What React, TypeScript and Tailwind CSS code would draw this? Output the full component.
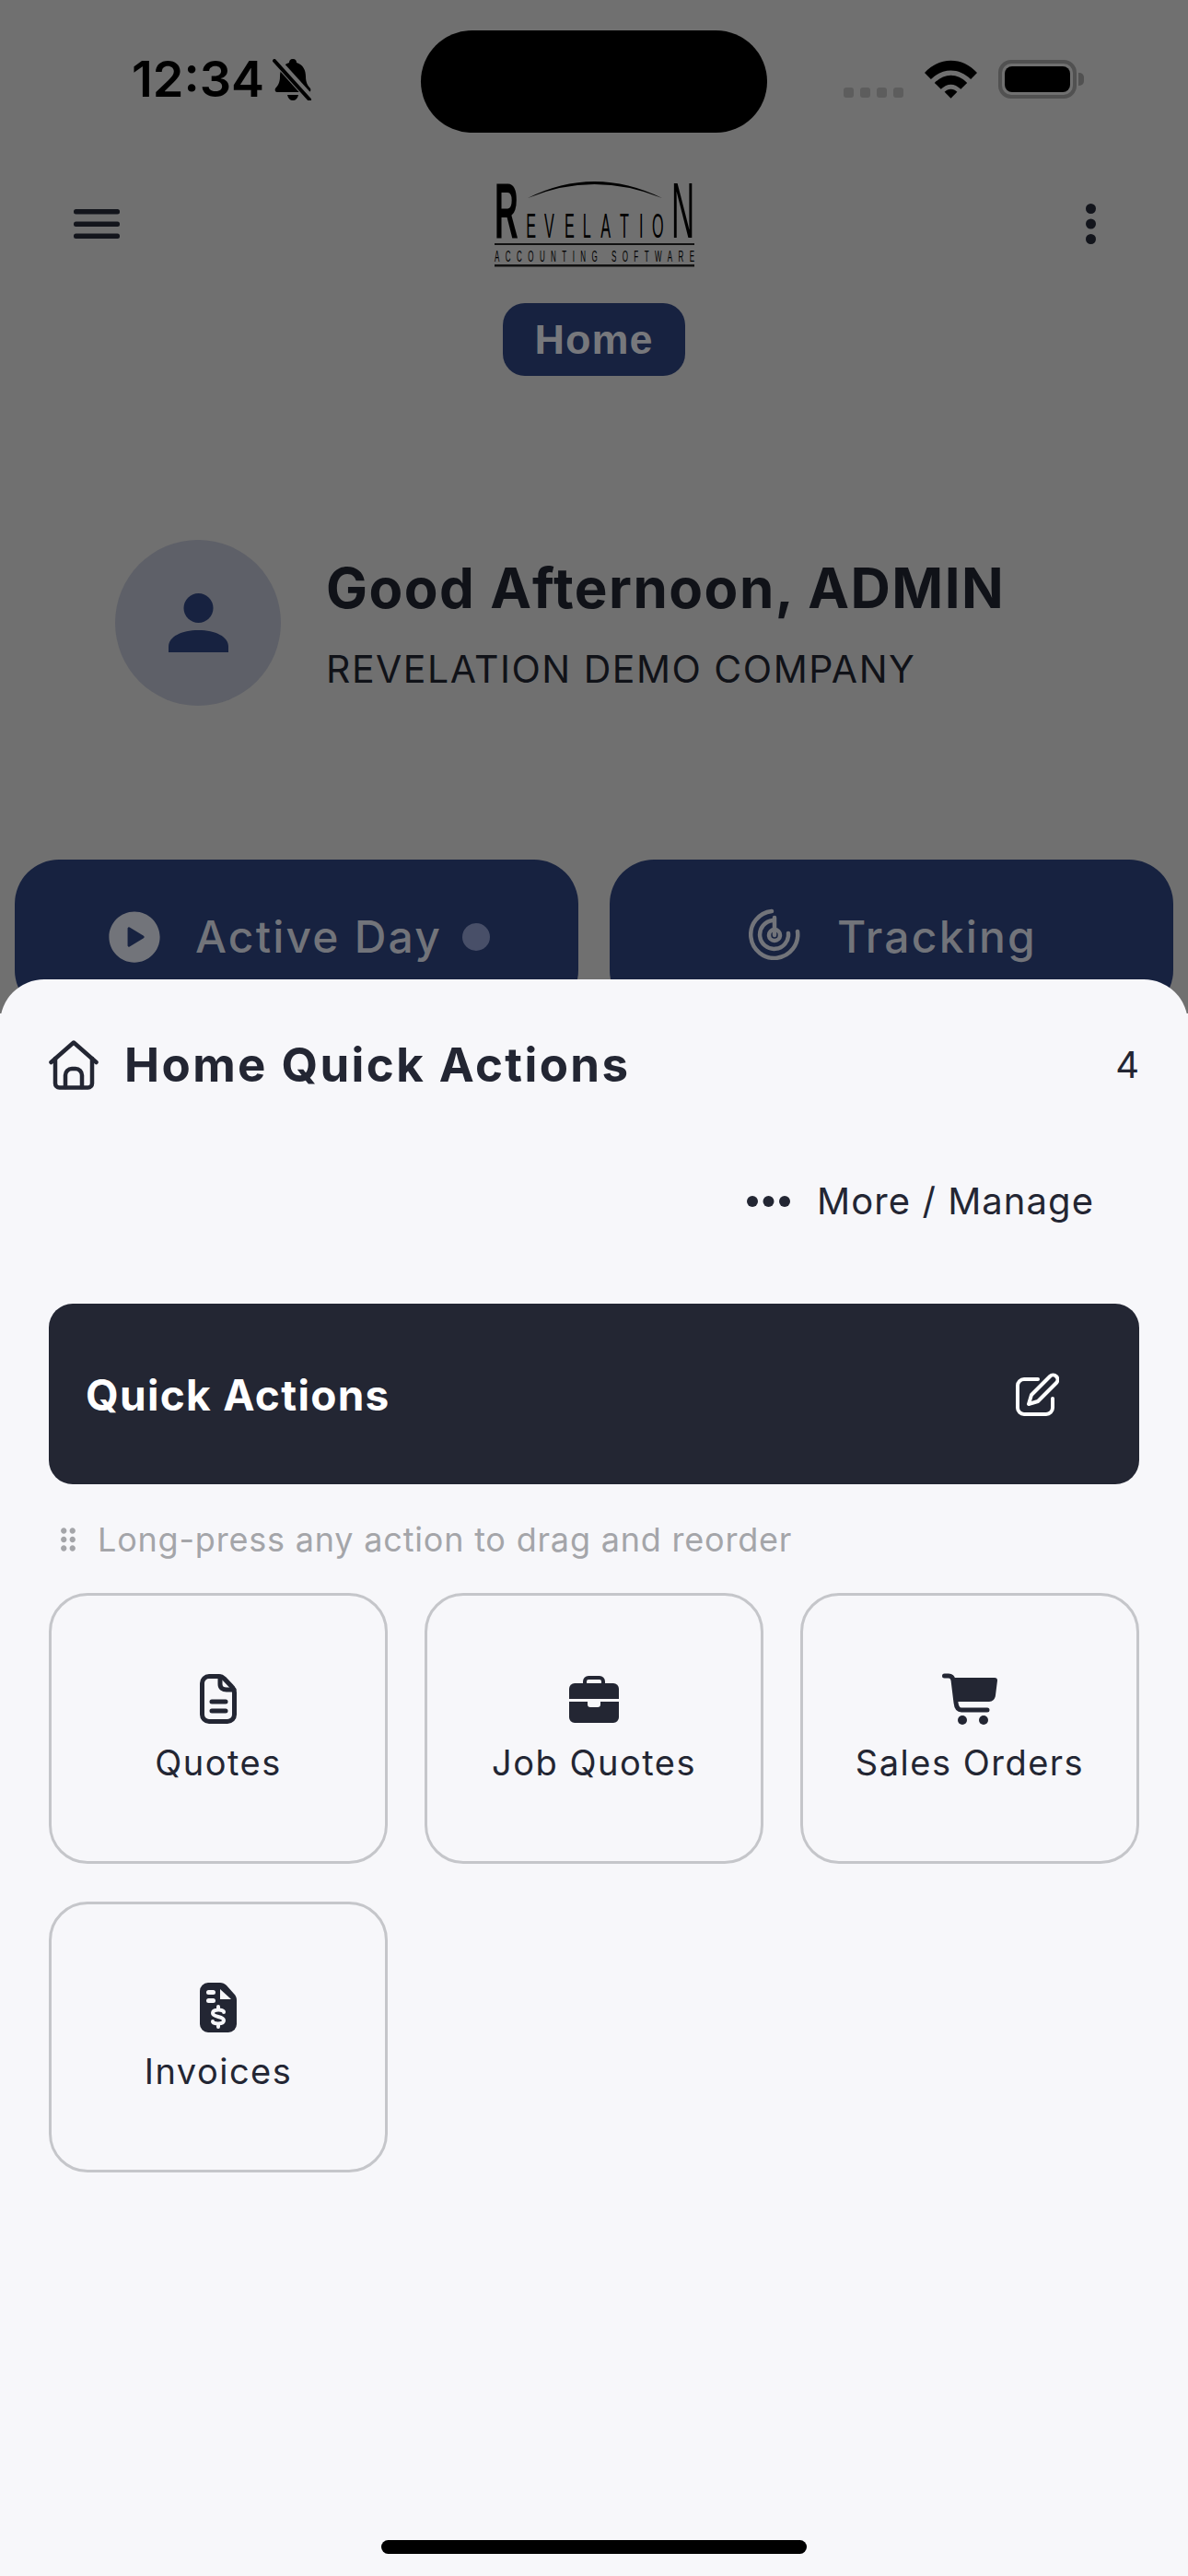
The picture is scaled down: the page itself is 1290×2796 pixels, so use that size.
import { IoPlayCircle } from 'react-icons/io5';
import { MdDragIndicator } from 'react-icons/md';

function QuoteIcon() {
  return (
    <svg width="40" height="54" viewBox="0 0 40 54" fill="none" stroke="currentColor" strokeWidth="5" strokeLinecap="round" strokeLinejoin="round">
      <path d="M10 2.5 H21 C23 2.5 25 3.5 26.5 5 L35 14 C36.5 15.5 37.5 17.5 37.5 20 V44 A7.5 7.5 0 0 1 30 51.5 H10 A7.5 7.5 0 0 1 2.5 44 V10 A7.5 7.5 0 0 1 10 2.5 Z" />
      <path d="M22 3 V11 C22 15 25 17 29 17 H37" />
      <path d="M13 30 H28 M13 40 H28" />
    </svg>
  );
}

function BriefcaseIcon() {
  return (
    <svg width="54" height="51" viewBox="0 0 54 51" fill="currentColor">
      <path d="M17 9 V6 A4 4 0 0 1 21 2 H33 A4 4 0 0 1 37 6 V9" fill="none" stroke="currentColor" strokeWidth="4" />
      <path d="M6 8 H48 A6 6 0 0 1 54 14 V25 H0 V14 A6 6 0 0 1 6 8 Z" />
      <path d="M0 28 H20 V31 A3 3 0 0 0 23 34 H31 A3 3 0 0 0 34 31 V28 H54 V45 A6 6 0 0 1 48 51 H6 A6 6 0 0 1 0 45 Z" />
    </svg>
  );
}

function CartIcon() {
  return (
    <svg width="60" height="56" viewBox="0 0 60 56" fill="currentColor">
      <path d="M2.5 3 H7 C10 3 11.5 4.5 12 7.5 L15 32 C15.5 37 17 40 21 40 H49" fill="none" stroke="currentColor" strokeWidth="5" strokeLinecap="round" />
      <path d="M12 5 H57 A3 3 0 0 1 60 8 L58 24 C57.5 28 55 31 51 31 H15 Z" />
      <circle cx="22" cy="51" r="5" />
      <circle cx="45" cy="51" r="5" />
    </svg>
  );
}

function InvoiceIcon() {
  return (
    <svg width="40" height="54" viewBox="0 0 40 54">
      <path fill="currentColor" d="M9 0 H22 C24.5 0 27 1 29 3 L37 12 C39 14 40 16 40 19 V45 A9 9 0 0 1 31 54 H9 A9 9 0 0 1 0 45 V9 A9 9 0 0 1 9 0 Z" />
      <path fill="#f7f7fa" d="M22 7 L34 18 H22 Z" />
      <rect x="7" y="8" width="10" height="5" rx="2.5" fill="#f7f7fa" />
      <rect x="7" y="17" width="10" height="5" rx="2.5" fill="#f7f7fa" />
      <path d="M26 32 C26 28.5 14 28.5 14 33 C14 38 26 36 26 41 C26 45.5 14 45.5 14 42 M20 26 V29 M20 45 V48" fill="none" stroke="#f7f7fa" strokeWidth="4" strokeLinecap="round" />
    </svg>
  );
}

const ACTIONS = [
  { label: 'Quotes', icon: <QuoteIcon /> },
  { label: 'Job Quotes', icon: <BriefcaseIcon /> },
  { label: 'Sales Orders', icon: <CartIcon /> },
  { label: 'Invoices', icon: <InvoiceIcon /> },
];

function Logo() {
  return (
    <svg width="217" height="93" viewBox="0 0 217 93" className="block overflow-visible font-['Liberation_Sans']" fill="#000">
      <path d="M36 18 Q 108 -18 182 18 Q 108 -12 36 18 Z" />
      <text transform="scale(0.42 1)" x="0" y="61" fontSize="85" fontWeight="700">R</text>
      <text transform="scale(0.45 1)" x="76 120 169 213 256 302 349 380" y="61" fontSize="36">EVELATIO</text>
      <text transform="scale(0.41 1)" x="468" y="61" fontSize="85">N</text>
      <rect x="0" y="67" width="217" height="2" fill="#111" />
      <text transform="scale(0.5 1)" x="0" y="87" fontSize="16" textLength="434" lengthAdjust="spacing">ACCOUNTING SOFTWARE</text>
      <rect x="0" y="90" width="217" height="2.5" fill="#111" />
    </svg>
  );
}

function StatusBar() {
  return (
    <div className="flex h-[172px] items-center justify-between pl-[143px] pr-[113px]">
      <div className="flex items-center gap-[9px] text-[54px] font-semibold leading-[60px] text-black">
        <span>12:34</span>
        <svg width="44" height="45" viewBox="0 0 44 45" fill="#000">
          <path d="M22 0 C25 0 26 2 26 4 C33 6 36 12 36 19 C36 25 38 29 41 32 C42 34 41 36 39 36 H5 C3 36 2 34 3 32 C6 29 8 25 8 19 C8 12 11 6 18 4 C18 2 19 0 22 0 Z" />
          <path d="M16 39 H28 C27 43 25 45 22 45 C19 45 17 43 16 39 Z" />
          <path d="M4 2 L42 44" stroke="#707070" strokeWidth="9" />
          <path d="M2 2 L40 44" stroke="#000" strokeWidth="4" strokeLinecap="round" />
        </svg>
      </div>
      <div className="flex items-end pb-[1px]">
        <div className="mr-[23px] flex gap-[7px] pb-[1px]">
          <span className="h-[11px] w-[11px] rounded-[3px] bg-[#5d5d5d]" />
          <span className="h-[11px] w-[11px] rounded-[3px] bg-[#5d5d5d]" />
          <span className="h-[11px] w-[11px] rounded-[3px] bg-[#5d5d5d]" />
          <span className="h-[11px] w-[11px] rounded-[3px] bg-[#5d5d5d]" />
        </div>
        <svg width="57" height="42" viewBox="0 0 58 42" className="mr-[23px]">
          <path d="M0 14 C 16 -4 42 -4 58 14 L51 21 C 38 8 20 8 7 21 Z" fill="#000" />
          <path d="M11 25 C 22 14 36 14 47 25 L40 32 C 33 25 25 25 18 32 Z" fill="#000" />
          <path d="M22 35 C 26 31 32 31 36 35 L29 42 Z" fill="#000" />
        </svg>
        <div className="flex items-center">
          <div className="h-[42px] w-[85px] rounded-[14px] border-[4px] border-[#515151] p-[3px]">
            <div className="h-full w-full rounded-[8px] bg-black" />
          </div>
          <span className="ml-[2px] h-[14px] w-[6px] rounded-r-[5px] bg-[#515151]" />
        </div>
      </div>
    </div>
  );
}

function RadarIcon() {
  return (
    <svg width="56" height="56" viewBox="0 0 56 56" fill="none" stroke="currentColor" strokeWidth="4.5" strokeLinecap="round">
      <path d="M25 3 A 25.5 25.5 0 1 0 53 25" />
      <path d="M26 13 A 15.5 15.5 0 1 0 43 27" />
      <circle cx="28" cy="29" r="6" />
      <path d="M28 10 V29" />
    </svg>
  );
}

function Background() {
  return (
    <div className="h-[1100px] bg-[#707070]">
      <StatusBar />
      <div className="grid grid-cols-[1fr_auto_1fr] items-start px-[80px] pt-[25px]">
        <svg width="50" height="32" viewBox="0 0 50 32" fill="#13151c" className="mt-[30px]">
          <rect width="50" height="5.5" rx="2.5" />
          <rect y="13.5" width="50" height="5.5" rx="2.5" />
          <rect y="26.5" width="50" height="5.5" rx="2.5" />
        </svg>
        <Logo />
        <div className="flex justify-end pr-[20px]">
          <svg width="11" height="44" viewBox="0 0 11 44" fill="#13151c" className="mt-[24px]">
            <circle cx="5.5" cy="5.5" r="5.5" />
            <circle cx="5.5" cy="22" r="5.5" />
            <circle cx="5.5" cy="38.5" r="5.5" />
          </svg>
        </div>
      </div>
      <div className="mt-[39px] flex justify-center">
        <div className="flex h-[79px] w-[198px] items-center justify-center rounded-[24px] bg-[#172240] font-['Liberation_Sans'] text-[45px] font-bold tracking-[1px] text-[#77787c]">
          Home
        </div>
      </div>
      <div className="mt-[178px] flex items-center gap-[49px] pl-[125px]">
        <div className="flex h-[180px] w-[180px] items-center justify-center rounded-full bg-[#5e6068]">
          <svg width="65" height="64" viewBox="0 0 65 64" fill="#172240">
            <circle cx="32.5" cy="16" r="16" />
            <path d="M0 64 V58 C0 47 14 40 32.5 40 C51 40 65 47 65 58 V64 Z" />
          </svg>
        </div>
        <div>
          <div className="text-[60px] font-bold leading-[72px] tracking-[1.5px] text-[#101218]">Good Afternoon, ADMIN</div>
          <div className="mt-[27px] text-[41px] leading-[50px] tracking-[1.5px] text-[#101218]">REVELATION DEMO COMPANY</div>
        </div>
      </div>
      <div className="mt-[167px] grid grid-cols-2 gap-[34px] px-[16px]">
        <div className="flex h-[168px] items-start justify-center gap-[35px] rounded-[48px] bg-[#172240] pt-[50px] text-[#72747a]">
          <IoPlayCircle className="-mr-[3px] h-[68px] w-[68px]" />
          <span className="mt-[3px] text-[48px] font-medium leading-[62px] tracking-[2.2px]">Active Day</span>
          <span className="-ml-[13px] mt-[19px] h-[30px] w-[30px] rounded-full bg-[#484f68]" />
        </div>
        <div className="flex h-[168px] items-start justify-center gap-[40px] rounded-[48px] bg-[#172240] pl-[3px] pt-[53px] text-[#72747a]">
          <RadarIcon />
          <span className="text-[48px] font-medium leading-[62px] tracking-[2.2px]">Tracking</span>
        </div>
      </div>
    </div>
  );
}

export default function App() {
  return (
    <div className="relative h-[2796px] w-[1290px] overflow-hidden bg-[#f7f7fa] font-['Inter',sans-serif]">
      <Background />
      {/* dynamic island */}
      <div className="absolute left-[457px] top-[33px] h-[111px] w-[376px] rounded-[56px] bg-black" />

      {/* bottom sheet */}
      <div className="absolute inset-x-0 bottom-0 top-[1063px] rounded-t-[48px] bg-[#f7f7fa] px-[53px] text-[#232633]">
        <div className="flex items-center justify-between pt-[62px]">
          <div className="flex items-center gap-[28px]">
            <svg width="54" height="54" viewBox="0 0 54 54" fill="none" stroke="currentColor" strokeWidth="4.5" strokeLinecap="round" strokeLinejoin="round">
              <path d="M2.5 24 L27 2.5 L51.5 24" />
              <path d="M7 20 V47 A4.5 4.5 0 0 0 11.5 51.5 H42.5 A4.5 4.5 0 0 0 47 47 V20" />
              <path d="M18 51 V38 A7 7 0 0 1 25 31 H29 A7 7 0 0 1 36 38 V51" />
            </svg>
            <span className="text-[51px] font-bold leading-[62px] tracking-[2.4px]">Home Quick Actions</span>
          </div>
          <span className="text-[40px] leading-[48px]">4</span>
        </div>
        <div className="mt-[91px] flex h-[52px] items-center justify-end gap-[29px] pr-[49px]">
          <svg width="47" height="14" viewBox="0 0 47 14" fill="currentColor">
            <circle cx="6" cy="7" r="6" />
            <circle cx="23.5" cy="7" r="6" />
            <circle cx="41" cy="7" r="6" />
          </svg>
          <span className="text-[40px] leading-[52px] tracking-[1.05px]">More / Manage</span>
        </div>
        <div className="mt-[85px] flex h-[196px] items-center justify-between rounded-[26px] bg-[#232633] pl-[40px] pr-[87px]">
          <span className="pt-[3px] text-[46px] font-bold tracking-[1.3px] text-white">Quick Actions</span>
          <svg width="47" height="47" viewBox="0 0 47 47" fill="none" stroke="#fff" strokeWidth="4" strokeLinecap="round" strokeLinejoin="round">
            <path d="M24 7 H9 A7 7 0 0 0 2 14 V38 A7 7 0 0 0 9 45 H33 A7 7 0 0 0 40 38 V28" />
            <path d="M14 34 L17 24 L37 4 C39 2 42 2 44 4 C46 6 46 9 44 11 L24 31 Z" />
          </svg>
        </div>
        <div className="mt-[38px] flex items-center gap-[13px] pl-[2px]">
          <MdDragIndicator className="h-[38px] w-[38px] text-[#a4a5a9]" />
          <span className="text-[36px] leading-[44px] tracking-[0.8px] text-[#a4a5a9]">Long-press any action to drag and reorder</span>
        </div>
        <div className="mt-[36px] grid grid-cols-3 gap-x-[40px] gap-y-[41px]">
          {ACTIONS.map((action) => (
            <div key={action.label} className="flex h-[294px] flex-col items-center rounded-[42px] border-[3px] border-[#c5c6ca] pt-[84px]">
              <div className="flex h-[56px] items-center justify-center">{action.icon}</div>
              <span className="mt-[16px] text-[38px] leading-[50px] tracking-[1.5px]">{action.label}</span>
            </div>
          ))}
        </div>
      </div>
      {/* home indicator */}
      <div className="absolute bottom-[24px] left-[414px] h-[15px] w-[462px] rounded-full bg-black" />
    </div>
  );
}
